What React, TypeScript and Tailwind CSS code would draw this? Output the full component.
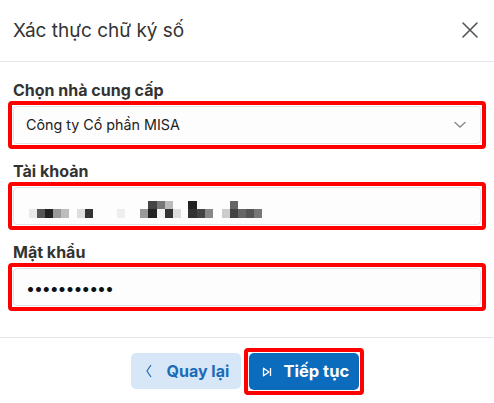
import React from "react";

const blocks: [number, number, number, string][] = [
  [29, 8, 8, "#e9e9e9"],
  [37, 8, 8, "#555"],
  [45, 8, 8, "#222"],
  [53, 8, 8, "#999"],
  [61, 8, 8, "#bdbdbd"],
  [77, 8, 8, "#dedede"],
  [85, 8, 8, "#333"],
  [117, 8, 8, "#eeeeee"],
  [140, 8, 8, "#999"],
  [148, 8, 9, "#222"],
  [157, 8, 8, "#f2f2f2"],
  [165, 8, 8, "#333"],
  [173, 8, 8, "#dddddd"],
  [188, 8, 9, "#333"],
  [197, 8, 8, "#444"],
  [205, 8, 8, "#888"],
  [222, 8, 8, "#cccccc"],
  [230, 8, 8, "#444"],
  [238, 8, 8, "#666"],
  [246, 8, 8, "#555"],
  [254, 8, 8, "#777"],
  [148, 0, 9, "#444"],
  [157, 0, 8, "#777"],
  [165, 0, 8, "#bbb"],
  [188, 0, 9, "#222"],
  [230, 0, 8, "#666"],
];

function Redacted() {
  return (
    <svg width="240" height="17" viewBox="0 0 240 17" className="block">
      {blocks.map(([x, y, w, c], i) => (
        <rect key={i} x={x - 26} y={y} width={w} height={y === 0 ? 8 : 9} fill={c} />
      ))}
    </svg>
  );
}

function Field({ label, children }: { label: string; children: React.ReactNode }) {
  return (
    <div className="flex flex-col">
      <div className="h-[20px] pl-[5px] text-[16px] font-bold leading-[20px] text-[#333]">{label}</div>
      <div className="mt-[1px] rounded-[4px] border-4 border-[#ff0000] p-[1px]">
        <div className="flex h-[38px] items-center rounded-[4px] border border-[#dfe3e8] bg-[#fdfdfe] pl-[12px] pr-[12px]">
          {children}
        </div>
      </div>
    </div>
  );
}

export default function App() {
  return (
    <div
      className="flex h-[403px] w-[494px] flex-col bg-white text-[#222]"
      style={{ fontFamily: "Inter, 'Noto Sans', sans-serif" }}
    >
      <div className="flex h-[62px] items-center justify-between border-b border-[#e3e6ea] pl-[13px] pr-[15px]">
        <div className="text-[19px] leading-[24px] text-[#333]">Xác thực chữ ký số</div>
        <svg width="18" height="18" viewBox="0 0 18 18" className="mt-[-1px]">
          <path d="M2 2 L16 16 M16 2 L2 16" stroke="#555" strokeWidth="1.6" strokeLinecap="round" />
        </svg>
      </div>

      <div className="flex flex-col gap-[12px] px-[8px] pt-[18px]">
        <Field label="Chọn nhà cung cấp">
          <div className="flex-1 text-[14.3px] text-[#222]">Công ty Cổ phần MISA</div>
          <svg width="12" height="8" viewBox="0 0 12 8" className="mr-[2px]">
            <path d="M1 1.5 L6 6 L11 1.5" stroke="#8a8a8a" strokeWidth="1.4" fill="none" strokeLinecap="round" />
          </svg>
        </Field>
        <Field label="Tài khoản">
          <div className="mt-[6px]">
            <Redacted />
          </div>
        </Field>
        <Field label="Mật khẩu">
          <div className="mt-[1px] text-[16px] tracking-[-1.1px] text-[#111]">•••••••••••</div>
        </Field>
      </div>

      <div className="mt-[26px] flex justify-center gap-[3px] border-t border-[#e3e6ea] pt-[10px]">
        <button className="mt-[5px] flex h-[36px] w-[110px] items-center rounded-[5px] bg-[#d7e7f8] pl-[14px] text-[16px] font-bold text-[#1a6cb8]">
          <svg width="8" height="14" viewBox="0 0 8 14" className="mr-[14px]">
            <path d="M6 1 L2 7 L6 13" stroke="#1a6cb8" strokeWidth="1.2" fill="none" />
          </svg>
          Quay lại
        </button>
        <div className="rounded-[4px] border-4 border-[#ff0000] p-[1px]">
          <button className="flex h-[37px] w-[110px] items-center rounded-[5px] bg-[#0b6bbd] pl-[13px] text-[16.5px] font-bold text-white">
            <svg width="10" height="10" viewBox="0 0 10 10" className="mr-[12px]">
              <path d="M1.5 1.2 L7 5 L1.5 8.8 Z" stroke="white" strokeWidth="1.3" fill="none" strokeLinejoin="round" />
              <path d="M8.5 1 L8.5 9" stroke="white" strokeWidth="1.3" />
            </svg>
            Tiếp tục
          </button>
        </div>
      </div>
    </div>
  );
}
